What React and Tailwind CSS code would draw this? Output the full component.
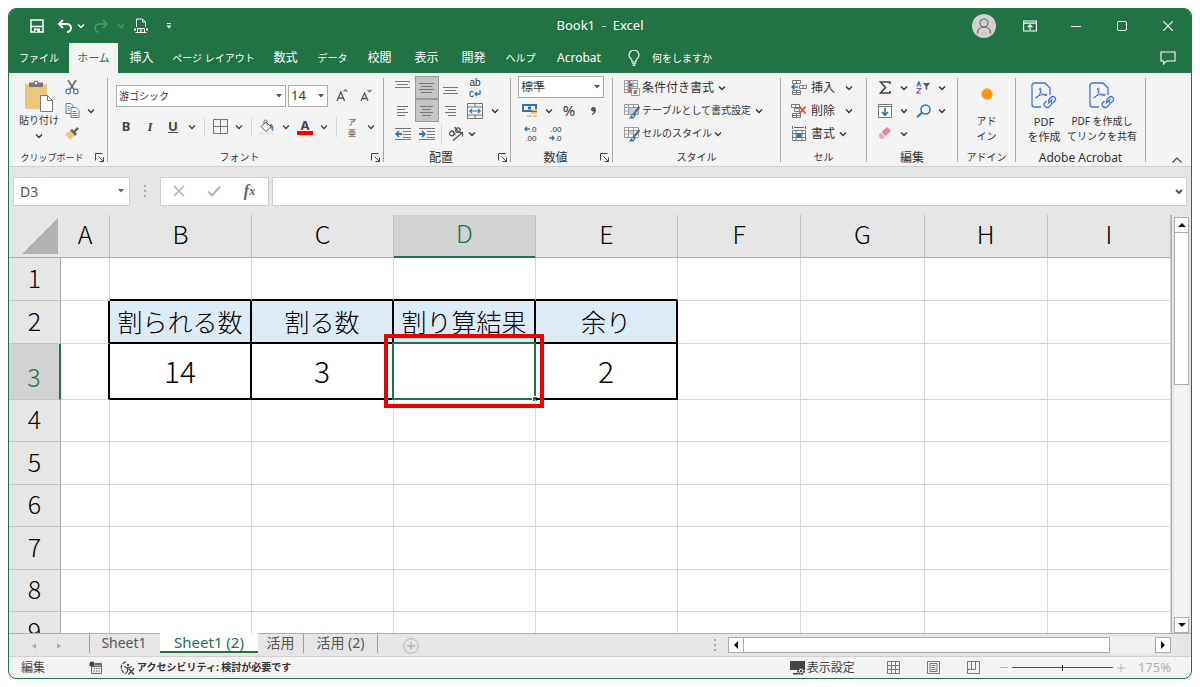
import { useState } from "react";

// リボンのタブ一覧
const TABS = [
    { label: "ファイル", size: "w-[60px] text-[10px]" },
    { label: "ホーム", size: "w-[49px] text-[11px]" },
    { label: "挿入", size: "w-[47px] text-xs" },
    { label: "ページ レイアウト", size: "w-[97px] text-[10px]" },
    { label: "数式", size: "w-[47px] text-xs" },
    { label: "データ", size: "w-[47px] text-[10px]" },
    { label: "校閲", size: "w-[47px] text-xs" },
    { label: "表示", size: "w-[47px] text-xs" },
    { label: "開発", size: "w-[47px] text-xs" },
    { label: "ヘルプ", size: "w-[47px] text-[10px]" },
    { label: "Acrobat", size: "w-[70px] text-xs" },
];

const COLUMNS = ["A", "B", "C", "D", "E", "F", "G", "H", "I"];

const ROWS = [
    { no: 1, height: "h-[43px]", cells: {} },
    { no: 2, height: "h-[43px]", cells: { B: "割られる数", C: "割る数", D: "割り算結果", E: "余り" } },
    { no: 3, height: "h-14", cells: { B: "14", C: "3", D: "", E: "2" } },
    { no: 4, height: "h-[42px]", cells: {} },
    { no: 5, height: "h-[43px]", cells: {} },
    { no: 6, height: "h-[42px]", cells: {} },
    { no: 7, height: "h-[43px]", cells: {} },
    { no: 8, height: "h-[42px]", cells: {} },
    { no: 9, height: "h-[42px]", cells: {} },
];

/* ---------- 共通パーツ ---------- */

function Chevron({ className = "" }) {
    return (
        <svg viewBox="0 0 8 8" className={`w-2 h-2 shrink-0 ${className}`} fill="none" stroke="currentColor" strokeWidth="1.3">
            <path d="M1 2.5 4 5.5 7 2.5" />
        </svg>
    );
}

function Tool({ label, className = "w-[22px]", children, ...rest }) {
    return (
        <button type="button" aria-label={label} className={`flex items-center justify-center h-[23px] shrink-0 ${className}`} {...rest}>
            {children}
        </button>
    );
}

function More({ label }) {
    return (
        <Tool label={`${label}のオプション`} className="w-4">
            <Chevron />
        </Tool>
    );
}

function Divider() {
    return <span className="w-px h-5 mx-1 bg-[#d5d5d5]" />;
}

function Picker({ label, value, className }) {
    return (
        <div className={`relative ${className}`}>
            <select aria-label={label} className="appearance-none w-full h-[22px] pl-0.5 bg-white border border-[#ababab] text-[#333] leading-none">
                <option>{value}</option>
            </select>
            <svg viewBox="0 0 6 4" className="absolute right-1 top-[9px] w-1.5 h-1 pointer-events-none" fill="#555">
                <path d="M0 0h6L3 3.6z" />
            </svg>
        </div>
    );
}

function Group({ name, className, bodyClass = "", nameClass = "text-xs", launcher, children }) {
    return (
        <>
            <section className={`flex flex-col shrink-0 ${className}`}>
                <div className={`h-[69px] ${bodyClass}`}>{children}</div>
                <div className="flex items-center h-[21px] pt-1">
                    <span className={`flex-1 text-center whitespace-nowrap ${nameClass}`}>{name}</span>
                    {launcher && (
                        <button type="button" aria-label={`${name}の設定`} className="w-2.5 mr-0.5">
                            <svg viewBox="0 0 10 10" className="w-2.5 h-2.5" fill="none" stroke="#444" strokeWidth="1">
                                <path d="M.5 7.5v-7h7M3.5 3.5l5 5M8.500 4.500v4h-4" />
                            </svg>
                        </button>
                    )}
                </div>
            </section>
            <span className="w-px mt-0.5 mb-1 bg-[#a8a8a8] shrink-0" />
        </>
    );
}

/* ---------- タイトルバー ---------- */

function TitleBar() {
    return (
        <div className="grid grid-cols-[1fr_auto_1fr] items-center h-[34px] text-white">
            <div className="flex items-center pl-4">
                <Tool label="上書き保存" className="w-6">
                    <svg viewBox="0 0 14 14" className="w-3.5 h-3.5" fill="none" stroke="#fff" strokeWidth="1.5">
                        <path d="M1 1h12v12H1zM1.500 7.500h11" />
                        <path d="M4 9.500h6V13H4z" fill="#fff" stroke="none" />
                        <path d="M5.500 11h1.500v2H5.500z" fill="#217346" stroke="none" />
                    </svg>
                </Tool>
                <Tool label="元に戻す" className="w-8">
                    <svg viewBox="0 0 16 14" className="w-4 h-3.5" fill="none" stroke="#fff" strokeWidth="2">
                        <path d="M6 1 2 5l4 4M2 5h7c3 0 5 1.600 5 4s-2 4-4 4" />
                    </svg>
                </Tool>
                <Chevron className="-ml-1" />
                <Tool label="やり直し" className="w-8 text-[#4f9a6d]">
                    <svg viewBox="0 0 16 14" className="w-4 h-3.5" fill="none" stroke="currentColor" strokeWidth="1.6">
                        <path d="M10 1l4 4-4 4M14 5H7C4 5 2 6.600 2 9s2 4 4 4" />
                    </svg>
                </Tool>
                <Chevron className="text-[#4f9a6d]" />
                <Tool label="印刷プレビュー" className="w-8">
                    <svg viewBox="0 0 14 16" className="w-3.5 h-4" fill="none" stroke="#fff" strokeWidth="1">
                        <path d="M2.500 9V1h6l3 3v5M8.500 1v3h3M3.500 10.500h7v4h-7zM1.500 14.500h11" />
                        <path d="M0 10.500h2v2H0zM12 10.500h2v2h-2z" fill="#fff" stroke="none" />
                        <circle cx="7" cy="12.500" r=".9" />
                    </svg>
                </Tool>
                <Tool label="クイック アクセスのカスタマイズ" className="w-6">
                    <svg viewBox="0 0 6 6" className="w-1.5 h-1.5" fill="#fff">
                        <path d="M1 0h4v1H1zM.5 2.500h5L3 5.500z" />
                    </svg>
                </Tool>
            </div>
            <h1 className="text-[13px] whitespace-pre">Book1  -  Excel</h1>
            <div className="flex items-center justify-end">
                <Tool label="アカウント" className="w-[46px]">
                    <svg viewBox="0 0 24 24" className="w-6 h-6" fill="none" stroke="#6b6b6b" strokeWidth="1.2">
                        <circle cx="12" cy="12" r="12" fill="#d2d0ce" stroke="none" />
                        <circle cx="12" cy="9" r="4" />
                        <path d="M5.500 19.500c0-4 2.800-6.500 6.500-6.500s6.500 2.500 6.500 6.500" />
                    </svg>
                </Tool>
                <Tool label="リボンの表示オプション" className="w-[46px]">
                    <svg viewBox="0 0 14 12" className="w-3.5 h-3" fill="none" stroke="#fff" strokeWidth="1.2">
                        <path d="M.6 1h12.800v10H.6zM.6 3.200h12.800M7 10V5M4.600 7.200 7 4.900l2.400 2.300" />
                    </svg>
                </Tool>
                <Tool label="最小化" className="w-[46px]">
                    <span className="w-2.5 h-px bg-white" />
                </Tool>
                <Tool label="最大化" className="w-[46px]">
                    <span className="w-2.5 h-2.5 border border-white rounded-xs" />
                </Tool>
                <Tool label="閉じる" className="w-[46px]">
                    <svg viewBox="0 0 10 10" className="w-2.5 h-2.5" stroke="#fff" strokeWidth="1.1">
                        <path d="M0 0l10 10M10 0 0 10" />
                    </svg>
                </Tool>
            </div>
        </div>
    );
}

function TabBar({ active, onSelect }) {
    return (
        <nav className="flex items-stretch h-[30px] text-white">
            {TABS.map((tab) => (
                <button
                    key={tab.label}
                    type="button"
                    onClick={() => onSelect(tab.label)}
                    className={`whitespace-nowrap ${tab.size} ${active === tab.label ? "bg-[#f3f3f3] text-[#217346]" : ""}`}
                >
                    {tab.label}
                </button>
            ))}
            <button type="button" className="flex items-center gap-3 pl-3.5 text-[10px]">
                <svg viewBox="0 0 12 16" className="w-3 h-4" fill="none" stroke="#fff" strokeWidth="1.1">
                    <path d="M4 12V10.500C4 9 1 8 1 5.200a5 5 0 0 1 10 0C11 8 8 9 8 10.500V12zM4 13.800h4M4.800 15.400h2.400" />
                </svg>
                何をしますか
            </button>
            <Tool label="コメント" className="w-[46px] ml-auto self-center">
                <svg viewBox="0 0 16 14" className="w-4 h-3.5" fill="none" stroke="#fff" strokeWidth="1.1">
                    <path d="M1 1h14v9H6.500L3.500 13v-3H1z" />
                </svg>
            </Tool>
        </nav>
    );
}

/* ---------- リボン ---------- */

function ClipboardGroup() {
    return (
        <Group name="クリップボード" nameClass="text-[9px]" className="w-[98px]" launcher>
            <div className="flex h-full">
                <button type="button" className="flex flex-col items-center w-[52px] pl-2 pt-1 text-[10px] leading-4 whitespace-nowrap">
                    <svg viewBox="0 0 28 32" className="w-7 h-8 shrink-0">
                        <path d="M0 4h22v25H0z" fill="#eec57c" />
                        <path d="M4 2.500h4.500a2.600 2.600 0 0 1 5 0H18V7H4z" fill="#777" />
                        <circle cx="11" cy="3" r="1.200" fill="#f3f3f3" />
                        <path d="M15.500 15.500h7l5 5v11h-12z" fill="#fff" stroke="#777" />
                        <path d="M22.500 15.500v5h5" fill="none" stroke="#777" />
                    </svg>
                    貼り付け
                    <Chevron className="mt-1" />
                </button>
                <div>
                    <Tool label="切り取り">
                        <svg viewBox="0 0 14 15" className="w-3.5 h-[15px]" fill="none" strokeWidth="1.500">
                            <path d="M3 0 9.200 10M11 0 4.800 10" stroke="#666" />
                            <circle cx="3.200" cy="11.500" r="2.300" stroke="#4a7ebb" strokeWidth="1.200" />
                            <circle cx="10.800" cy="11.500" r="2.300" stroke="#4a7ebb" strokeWidth="1.200" />
                        </svg>
                    </Tool>
                    <div className="flex">
                        <Tool label="コピー">
                            <svg viewBox="0 0 15 15" className="w-[15px] h-[15px]" fill="#fff" stroke="#777">
                                <path d="M1 .5h5l2 2v8H1z" />
                                <path d="M6 4.500h5l3 3v7H6z" />
                                <path d="M2.500 3.500h2M2.500 5.500h2M2.500 7.500h2M7.500 8.500h4M7.500 10.500h5M7.500 12.500h5" stroke="#4a7ebb" />
                            </svg>
                        </Tool>
                        <More label="コピー" />
                    </div>
                    <Tool label="書式のコピー">
                        <svg viewBox="0 0 14 13" className="w-3.5 h-[13px]">
                            <path d="M0 7l5-3 4 5-4 4z" fill="#eec57c" />
                            <path d="M5 3.500 7 2l2 1.500L12 0l2 2-3.500 3L12 7l-2 2z" fill="#666" />
                        </svg>
                    </Tool>
                </div>
            </div>
        </Group>
    );
}

function FontGroup() {
    return (
        <Group name="フォント" nameClass="text-[10px]" className="w-[275px]" launcher>
            <div className="flex items-center pl-2 pt-2">
                <Picker label="フォント" value="游ゴシック" className="w-[170px] text-[10px]" />
                <Picker label="フォント サイズ" value="14" className="w-10 ml-0.5 text-[13px]" />
                <Tool label="フォント サイズの拡大" className="w-6 ml-0.5">
                    <svg viewBox="0 0 12 13" className="w-3 h-[13px]" fill="none" stroke="#555" strokeWidth="1.300">
                        <path d="M1 12 4.800 3 8.600 12M2.300 9h5" />
                        <path d="M7.500 2.800 9.500.8l2 2" stroke="#4a7ebb" />
                    </svg>
                </Tool>
                <Tool label="フォント サイズの縮小" className="w-6">
                    <svg viewBox="0 0 12 13" className="w-3 h-[13px]" fill="none" stroke="#555" strokeWidth="1.300">
                        <path d="M1 12 4.500 4 8 12M2.300 9.500h4.500" />
                        <path d="M7.500.8l2 2 2-2" stroke="#4a7ebb" />
                    </svg>
                </Tool>
            </div>
            <div className="flex items-center pl-1.5 pt-2 text-[13px] text-[#444]">
                <Tool label="太字" className="w-6 font-bold">B</Tool>
                <Tool label="斜体" className="w-6 font-bold italic font-['Liberation_Serif',serif]">I</Tool>
                <Tool label="下線" className="w-[22px] font-bold underline">U</Tool>
                <More label="下線" />
                <Divider />
                <Tool label="罫線">
                    <svg viewBox="0 0 15 15" className="w-[15px] h-[15px]" fill="none" stroke="#777">
                        <path d="M.5.5h14v14H.5zM7.500.5v14M.5 7.500h14" />
                    </svg>
                </Tool>
                <More label="罫線" />
                <Divider />
                <Tool label="塗りつぶしの色">
                    <svg viewBox="0 0 16 16" className="w-4 h-4" fill="none" stroke="#666">
                        <path d="M2 7.500 7 3l5 5-5 4.500zM5 5V2.500a1.500 1.500 0 0 1 3 0V6" />
                        <path d="M11 5c2.500.500 3.500 3 2.500 6.500L12 7.500z" fill="#4a7ebb" stroke="#4a7ebb" />
                        <path d="M0 14.500h15" stroke="#e0e6ea" strokeWidth="2" />
                    </svg>
                </Tool>
                <More label="塗りつぶしの色" />
                <Tool label="フォントの色" className="w-[22px] flex-col">
                    <span className="font-bold leading-3">A</span>
                    <span className="w-4 h-1 bg-[#ff0000]" />
                </Tool>
                <More label="フォントの色" />
                <Divider />
                <Tool label="ふりがな" className="w-[22px] flex-col text-[8px] leading-[11px]">
                    <span>ア</span>
                    <span>亜</span>
                </Tool>
                <More label="ふりがな" />
            </div>
        </Group>
    );
}

function Lines({ d }) {
    return (
        <svg viewBox="0 0 16 16" className="w-4 h-4" fill="none" stroke="#777">
            <path d={d} />
        </svg>
    );
}

function IndentIcon({ arrow }) {
    return (
        <svg viewBox="0 0 16 14" className="w-4 h-3.5" fill="none" stroke="#777">
            <path d="M0 1.500h16M8 4.500h8M8 7.500h8M8 10.500h8M0 12.500h16" />
            <path d={arrow} stroke="#2f75b5" strokeWidth="1.800" />
        </svg>
    );
}

function AlignGroup() {
    return (
        <Group name="配置" className="w-[126px]" launcher>
            <div className="flex pl-[7px]">
                <Tool label="上揃え" className="w-6"><Lines d="M0 1.500h15M2 4.500h11M0 7.500h15" /></Tool>
                <Tool label="上下中央揃え" className="w-6 bg-[#c5c5c5] border border-[#999]"><Lines d="M0 3.500h15M2 6.500h11M0 9.500h15M2 12.500h11" /></Tool>
                <Tool label="下揃え" className="w-6"><Lines d="M0 7.500h15M2 10.500h11M0 13.500h15" /></Tool>
                <Tool label="折り返して全体を表示する" className="w-6 flex-col text-[10px] leading-[11px] font-['Liberation_Sans',sans-serif]">
                    <span>ab</span>
                    <span className="flex items-center">
                        c
                        <svg viewBox="0 0 7 7" className="w-[7px] h-[7px]" fill="none" stroke="#2f75b5" strokeWidth="1.300">
                            <path d="M6 0v4H1M3 2 1 4l2 2" />
                        </svg>
                    </span>
                </Tool>
            </div>
            <div className="flex pl-[7px]">
                <Tool label="左揃え" className="w-6"><Lines d="M2 3.500h11M2 6.500h8M2 9.500h11M2 12.500h8" /></Tool>
                <Tool label="中央揃え" className="w-6 bg-[#c5c5c5] border border-[#999]"><Lines d="M1 3.500h13M3 6.500h9M1 9.500h13M3 12.500h9" /></Tool>
                <Tool label="右揃え" className="w-6"><Lines d="M2 3.500h11M5 6.500h8M2 9.500h11M5 12.500h8" /></Tool>
                <Tool label="セルを結合して中央揃え" className="w-6">
                    <svg viewBox="0 0 16 16" className="w-4 h-4" fill="none" stroke="#777">
                        <path d="M.5.5h15v15H.5zM.5 4h15M.5 12h15M8 .5V4M8 12v3.500" />
                        <path d="M2.500 8h11M5 6 2.800 8 5 10M11 6l2.200 2L11 10" stroke="#2f75b5" strokeWidth="1.200" />
                    </svg>
                </Tool>
                <More label="セルの結合" />
            </div>
            <div className="flex items-center pl-[7px]">
                <Tool label="インデントを減らす" className="w-6"><IndentIcon arrow="M7 7H1.500M4 4 1.200 7 4 10" /></Tool>
                <Tool label="インデントを増やす" className="w-6"><IndentIcon arrow="M0 7h5.500M3 4l2.800 3L3 10" /></Tool>
                <span className="w-px h-5 ml-0.5 bg-[#d5d5d5]" />
                <Tool label="方向" className="w-6 ml-0.5">
                    <svg viewBox="0 0 16 16" className="w-4 h-4" fill="none" stroke="#555" strokeWidth="1.200">
                        <circle cx="3.800" cy="7.500" r="2.300" />
                        <path d="M3.800 4.200 7.500 8.500M6.500 1l4.200 5" />
                        <circle cx="10" cy="4.200" r="2.300" />
                        <path d="M5 14.500 14.500 6.500M10.500 6.500h4v4" />
                    </svg>
                </Tool>
                <Tool label="方向のオプション" className="w-2"><Chevron /></Tool>
            </div>
        </Group>
    );
}

function DecimalIcon({ first, second, arrow }) {
    const mark = (
        <svg viewBox="0 0 6 6" className="w-1.5 h-1.5" fill="none" stroke="#2f75b5" strokeWidth="1.500">
            <path d={arrow === "left" ? "M6 3H1M3 1 1 3l2 2" : "M0 3h5M3 1l2 2-2 2"} />
        </svg>
    );
    return (
        <span className="flex flex-col items-end text-[8px] leading-[9px] font-['Liberation_Sans',sans-serif]">
            <span className="flex items-center">{arrow === "left" && mark}{first}</span>
            <span className="flex items-center">{arrow === "right" && mark}{second}</span>
        </span>
    );
}

function NumberGroup() {
    return (
        <Group name="数値" className="w-[101px]" launcher>
            <Picker label="表示形式" value="標準" className="w-[86px] ml-[7px] text-xs" />
            <div className="flex pl-2 pt-px">
                <Tool label="通貨表示形式">
                    <svg viewBox="0 0 16 16" className="w-4 h-4">
                        <path d="M0 1h15v8H0z" fill="#2f75b5" />
                        <path d="M2 3h11v4H2z" fill="#f3f3f3" />
                        <circle cx="7.500" cy="5" r="1.800" fill="#2f75b5" />
                        <path d="M10 6h5v2h-5zM9 9h6v2H9zM5 12h5v2H5zM11 12h4v2h-4z" fill="#eec57c" />
                    </svg>
                </Tool>
                <More label="通貨表示形式" />
                <Tool label="パーセント スタイル" className="w-6 text-[15px]">%</Tool>
                <Tool label="桁区切りスタイル" className="w-6">
                    <svg viewBox="0 0 5 8" className="w-[5px] h-2" fill="#555">
                        <path d="M2.300 0C4 0 5 1.200 5 2.800 5 5 3.500 7.300 1 8L.7 7.200C2 6.500 2.800 5.500 2.800 4.500 1.200 4.800 0 3.800 0 2.300 0 1 1 0 2.300 0z" />
                    </svg>
                </Tool>
            </div>
            <div className="flex gap-0.5 pl-2">
                <Tool label="小数点以下の表示桁数を増やす"><DecimalIcon first=".0" second=".00" arrow="left" /></Tool>
                <Tool label="小数点以下の表示桁数を減らす" className="w-6"><DecimalIcon first=".00" second=".0" arrow="right" /></Tool>
            </div>
        </Group>
    );
}

function TableIcon({ children }) {
    return (
        <svg viewBox="0 0 16 16" className="w-4 h-4 shrink-0" fill="none" stroke="#999">
            <path d="M.5 1.500h14v10H.5z" fill="#fff" />
            <path d="M.5 4.500h14M.5 8h14M4.500 1.500v10M9.500 1.500v10" />
            {children}
        </svg>
    );
}

function Brush() {
    return (
        <>
            <path d="M15.500 4 10.500 10" stroke="#666" strokeWidth="2" />
            <path d="M10 9.500 12 11.500l-2.500 4H4.500c2-1 2.500-4 5.500-6z" fill="#2f75b5" stroke="none" />
            <path d="M8.500 11.500l1.500 1.300-1.500 1.700z" fill="#fff" stroke="none" />
        </>
    );
}

function StyleGroup() {
    const item = "flex items-center gap-0.5 h-[23px] whitespace-nowrap";
    return (
        <Group name="スタイル" nameClass="text-[10px]" className="w-[167px]" bodyClass="pl-[11px]">
            <button type="button" className={`${item} text-xs`}>
                <svg viewBox="0 0 16 16" className="w-4 h-4 shrink-0" fill="#fff" stroke="#999">
                    <path d="M.5.5h13v12H.5zM.5 3.500h13M.5 6.500h13M.5 9.500h13M4 .5v12M9 .5v12" />
                    <path d="M4.500 1h2v2h-2zM4.500 10h3v2h-3z" fill="#e04a2f" stroke="none" />
                    <path d="M4.500 4h4v2h-4z" fill="#2f75b5" stroke="none" />
                    <path d="M4.500 7h3v2h-3z" fill="#e04a2f" stroke="none" />
                    <path d="M7.500 8.500h8v7h-8z" />
                    <path d="M9.500 11h4M9.500 13h4M12.500 9.800l-2 4.400" stroke="#555" />
                </svg>
                条件付き書式
                <Chevron className="ml-0.5" />
            </button>
            <button type="button" className={`${item} text-[10px]`}>
                <TableIcon>
                    <path d="M5 5h9v6H5z" fill="#b8d0ea" stroke="none" />
                    <Brush />
                </TableIcon>
                テーブルとして書式設定
                <Chevron className="ml-0.5" />
            </button>
            <button type="button" className={`${item} text-[10px]`}>
                <TableIcon>
                    <path d="M5 5h4v3H5z" fill="#b8d0ea" stroke="none" />
                    <Brush />
                </TableIcon>
                セルのスタイル
                <Chevron />
            </button>
        </Group>
    );
}

function CellGroup() {
    const item = "flex items-center gap-1 h-[23px] text-xs whitespace-nowrap";
    return (
        <Group name="セル" nameClass="text-[10px]" className="w-[85px]" bodyClass="pl-2.5">
            <button type="button" className={item}>
                <svg viewBox="0 0 16 16" className="w-4 h-4" fill="#fff" stroke="#777">
                    <path d="M1.500.5h8v3h-8zM5.500.5v3M1.500 10.500h8v4h-8zM5.500 10.500v4M1.500 12.500h8M8.500 5.500h7v3h-7zM12 5.500v3" />
                    <path d="M7 7H1M3.500 4.500 1 7l2.500 2.500" fill="none" stroke="#2f75b5" strokeWidth="1.500" />
                </svg>
                挿入
                <Chevron className="ml-1.5" />
            </button>
            <button type="button" className={item}>
                <svg viewBox="0 0 16 16" className="w-4 h-4" fill="#fff" stroke="#777">
                    <path d="M.5 1.500h8v3h-8zM4.500 1.500v3M1.500 10.500h8v4h-8zM5.500 10.500v4M1.500 12.500h8M3.500 5.500h5v3h-5z" />
                    <path d="M8.500 3.500l6 7M14.500 3.500l-6 7" stroke="#e04a2f" strokeWidth="1.800" />
                </svg>
                削除
                <Chevron className="ml-1.5" />
            </button>
            <button type="button" className={item}>
                <svg viewBox="0 0 16 16" className="w-4 h-4" fill="#fff" stroke="#777">
                    <path d="M1.500 4.500h13v10h-13zM1.500 7.500h13M1.500 11.500h13M5 4.500v10M11 4.500v10" />
                    <path d="M5.500 7h5v5h-5z" fill="#2f75b5" stroke="none" />
                    <path d="M1.500 0v3M14.500 0v3M3 1.500h10" stroke="#2f75b5" />
                </svg>
                書式
                <Chevron />
            </button>
        </Group>
    );
}

function EditGroup() {
    return (
        <Group name="編集" className="w-[90px]">
            <div className="flex pl-[7px]">
                <Tool label="オート SUM">
                    <svg viewBox="0 0 12 13" className="w-3 h-[13px]" fill="none" stroke="#444" strokeWidth="1.600">
                        <path d="M11 3V1H1.500L6.500 6.500l-5 5.500H11v-2" />
                    </svg>
                </Tool>
                <More label="オート SUM" />
                <Tool label="並べ替えとフィルター">
                    <svg viewBox="0 0 14 13" className="w-3.5 h-[13px]" fill="none" strokeWidth="1.100">
                        <path d="M.8 5.500 2.800.5l2 5M1.500 4h2.600" stroke="#2f75b5" />
                        <path d="M.8 7.500h4L.8 12h4" stroke="#8a4fa3" />
                        <path d="M7 2h7l-2.700 3.500V9L9.700 8V5.500z" fill="#555" />
                    </svg>
                </Tool>
                <More label="並べ替え" />
            </div>
            <div className="flex pl-[7px]">
                <Tool label="フィル">
                    <svg viewBox="0 0 14 14" className="w-3.5 h-3.5" fill="#fff" stroke="#777">
                        <path d="M.5.5h13v13H.5zM.5 2.500h13" />
                        <path d="M7 4v7M4 8l3 3.200L10 8" fill="none" stroke="#2f75b5" strokeWidth="1.800" />
                    </svg>
                </Tool>
                <More label="フィル" />
                <Tool label="検索と選択">
                    <svg viewBox="0 0 15 14" className="w-[15px] h-3.5" fill="none" stroke="#2f75b5">
                        <circle cx="9.500" cy="5.500" r="4.500" strokeWidth="1.500" />
                        <path d="M6.200 8.500 1 13.200" strokeWidth="2" />
                    </svg>
                </Tool>
                <More label="検索" />
            </div>
            <div className="flex pl-[7px]">
                <Tool label="クリア">
                    <svg viewBox="0 0 14 13" className="w-3.5 h-[13px]">
                        <path d="M9 0l4 4-5.500 5-4-4z" fill="#e8829a" />
                        <path d="M2.800 5.800l4 4L4.500 12H3L1 9.500V7.500z" fill="#eea3b4" />
                    </svg>
                </Tool>
                <More label="クリア" />
            </div>
        </Group>
    );
}

function PdfIcon() {
    return (
        <svg viewBox="0 0 26 28" className="w-[26px] h-7 shrink-0" fill="none" stroke="#3d73e0" strokeWidth="1.300">
            <path d="M10 25H3.500A2.500 2.500 0 0 1 1 22.500v-19A2.500 2.500 0 0 1 3.500 1H14l5 5v7" />
            <path d="M5 16c3-1.500 5-5.500 5-9 0-1.500-1.500-1.500-1.300 0 .5 3.500 3.300 6.500 6.300 6.500 1.500 0 1.500-1.300 0-1.300-3.500 0-6.500 1-9.500 2.800-1 .7-1.300 1-.5 1z" strokeWidth="1" />
            <path d="M17 21.500l4.500-4.500M15.500 19 14 20.500a2.700 2.700 0 0 0 0 3.800M14 24.300l.4.400a2.700 2.700 0 0 0 3.800 0l1.800-1.800a2.700 2.700 0 0 0 0-3.800M18 20a2.700 2.700 0 0 1 .3-3l1.800-1.800a2.700 2.700 0 0 1 3.800 3.800L22 21" />
        </svg>
    );
}

function Ribbon() {
    return (
        <div className="flex items-stretch h-[93px] pt-[3px] bg-[#f3f3f3] text-[#333] overflow-hidden">
            <ClipboardGroup />
            <FontGroup />
            <AlignGroup />
            <NumberGroup />
            <StyleGroup />
            <CellGroup />
            <EditGroup />
            <Group name="アドイン" nameClass="text-[10px]" className="w-[57px]">
                <button type="button" className="flex flex-col items-center w-full pt-3 text-[10px] leading-[15px]">
                    <span className="w-3 h-3 rounded-full bg-[#ff9208] border border-[#ffc680] mb-3.5" />
                    アド<br />イン
                </button>
            </Group>
            <Group name="Adobe Acrobat" className="w-[129px]">
                <div className="flex items-start pl-1.5 pt-1.5 leading-[15px] whitespace-nowrap">
                    <button type="button" className="flex flex-col items-center w-11 gap-1 text-[11px]">
                        <PdfIcon />
                        <span>PDF<br />を作成</span>
                    </button>
                    <button type="button" className="flex flex-col items-center w-[72px] gap-1 text-[10px]">
                        <PdfIcon />
                        <span>PDF を作成し<br />てリンクを共有</span>
                    </button>
                </div>
            </Group>
            <button type="button" aria-label="リボンを折りたたむ" className="ml-auto self-end mr-2 mb-0.5">
                <svg viewBox="0 0 12 8" className="w-3 h-2" fill="none" stroke="#444" strokeWidth="1.200">
                    <path d="M1.500 6.500 6 2l4.500 4.500" />
                </svg>
            </button>
        </div>
    );
}

function FormulaBar() {
    return (
        <div className="flex items-center h-[49px] px-1 bg-[#e6e6e6] border-t border-[#d0d0d0]">
            <div className="relative w-[117px]">
                <input aria-label="名前ボックス" defaultValue="D3" className="w-full h-[29px] pl-1.5 bg-white border border-[#cfcfcf] text-sm text-[#555]" />
                <svg viewBox="0 0 6 4" className="absolute right-1.5 top-3 w-1.5 h-1" fill="#666">
                    <path d="M0 0h6L3 3.600z" />
                </svg>
            </div>
            <svg viewBox="0 0 2 12" className="w-0.5 h-3 mx-3.5" fill="#aaa">
                <path d="M0 0h2v2H0zM0 5h2v2H0zM0 10h2v2H0z" />
            </svg>
            <div className="flex items-center w-[109px] h-[29px] bg-white border border-[#cfcfcf]">
                <Tool label="キャンセル" className="w-[35px]">
                    <svg viewBox="0 0 12 12" className="w-3 h-3" stroke="#b5b5b5" strokeWidth="1.600">
                        <path d="M1 1l10 10M11 1 1 11" />
                    </svg>
                </Tool>
                <Tool label="入力" className="w-9">
                    <svg viewBox="0 0 14 12" className="w-3.5 h-3" fill="none" stroke="#b5b5b5" strokeWidth="2">
                        <path d="M1 6.500 5 10.500 13 1.500" />
                    </svg>
                </Tool>
                <Tool label="関数の挿入" className="w-[35px] items-baseline italic font-bold text-[#666] font-['Liberation_Serif',serif] text-base">
                    f<span className="text-xs">x</span>
                </Tool>
            </div>
            <div className="relative flex-1 ml-[3px]">
                <input aria-label="数式バー" className="block w-full h-[29px] px-2 bg-white border border-[#cfcfcf] text-sm" />
                <svg viewBox="0 0 8 6" className="absolute right-1 top-3 w-2 h-1.5" fill="none" stroke="#555" strokeWidth="2">
                    <path d="M1 1l3 3 3-3" />
                </svg>
            </div>
        </div>
    );
}

/* ---------- シート ---------- */

function cellClass(row, col) {
    const inTable = (r, c) => (r === 2 || r === 3) && "BCDE".includes(c);
    const next = COLUMNS[COLUMNS.indexOf(col) + 1];
    const right = inTable(row, col) || (next && inTable(row, next)) ? "border-r-2 border-r-black" : "border-r border-r-[#d6d6d6]";
    const bottom = inTable(row, col) || inTable(row + 1, col) ? "border-b-2 border-b-black" : "border-b border-b-[#d6d6d6]";
    const look = inTable(row, col) && row === 2 ? "bg-[#ddebf7] text-[25px]" : "pb-0.5 text-[30px]";
    return `${right} ${bottom} ${look}`;
}

function Sheet() {
    return (
        <div className="flex-1 min-w-0 overflow-hidden bg-white">
            <table className="w-full table-fixed border-separate border-spacing-0 text-center leading-none font-light text-black font-['Noto_Sans_CJK_JP',sans-serif]">
                <colgroup>
                    <col className="w-[52px]" />
                    <col className="w-[49px]" />
                    <col className="w-[142px]" />
                    <col className="w-[142px]" />
                    <col className="w-[142px]" />
                    <col className="w-[142px]" />
                    <col />
                    <col />
                    <col />
                    <col />
                </colgroup>
                <thead>
                    <tr className="h-[43px] text-[25px]">
                        <th className="bg-[#e6e6e6] border-b border-[#b0b0b0] p-0">
                            <svg viewBox="0 0 36 36" className="w-9 h-9 ml-auto mr-[3px]" fill="#b2b2b2">
                                <path d="M36 0v36H0z" />
                            </svg>
                        </th>
                        {COLUMNS.map((col) => (
                            <th
                                key={col}
                                scope="col"
                                className={`p-0 pb-1.5 font-light border-r border-r-[#c0c0c0] ${col === "D" ? "bg-[#d2d2d2] text-[#217346] border-b-2 border-b-[#217346]" : "bg-[#e6e6e6] border-b border-b-[#b0b0b0]"}`}
                            >
                                {col}
                            </th>
                        ))}
                    </tr>
                </thead>
                <tbody>
                    {ROWS.map((row) => (
                        <tr key={row.no} className={row.height}>
                            <th
                                scope="row"
                                className={`p-0 pb-1 align-bottom font-light text-[25px] leading-[37px] border-b border-b-[#c4c4c4] ${row.no === 3 ? "bg-[#d2d2d2] text-[#217346] border-r-2 border-r-[#217346]" : "bg-[#e6e6e6] border-r border-r-[#a6a6a6]"}`}
                            >
                                {row.no}
                            </th>
                            {COLUMNS.map((col) => (
                                <td key={col} className={`relative p-0 whitespace-nowrap ${cellClass(row.no, col)}`}>
                                    {row.cells[col]}
                                    {row.no === 3 && col === "D" && (
                                        <>
                                            <span className="absolute -inset-x-0.5 -inset-y-0.5 border-2 border-[#217346]" />
                                            <span className="absolute -right-[3px] -bottom-[3px] w-[5px] h-[5px] bg-[#217346] border-l border-t border-white" />
                                            <span className="absolute -inset-2.5 z-10 border-4 border-[#f00000]" />
                                        </>
                                    )}
                                </td>
                            ))}
                        </tr>
                    ))}
                </tbody>
            </table>
        </div>
    );
}

function ScrollButton({ label, d, className = "w-4 h-4" }) {
    return (
        <button type="button" aria-label={label} className={`flex items-center justify-center shrink-0 bg-white border border-[#ababab] ${className}`}>
            <svg viewBox="0 0 8 8" className="w-2 h-2" fill="#111">
                <path d={d} />
            </svg>
        </button>
    );
}

function SheetTabs() {
    return (
        <div className="flex items-start h-[23px] bg-[#e6e6e6] border-t border-[#b0b0b0] text-sm leading-4 text-[#555]">
            <Tool label="前のシート" className="w-12 pl-0.5">
                <svg viewBox="0 0 4 6" className="w-1 h-1.5" fill="#b0b0b0"><path d="M4 0v6L0 3z" /></svg>
            </Tool>
            <Tool label="次のシート" className="w-[32px] justify-start">
                <svg viewBox="0 0 4 6" className="w-1 h-1.5" fill="#b0b0b0"><path d="M0 0v6l4-3z" /></svg>
            </Tool>
            <button type="button" className="w-[71px] h-[19px] pb-0.5 pr-0.5 border-l border-[#a0a0a0]">Sheet1</button>
            <button type="button" className="w-[98px] h-5 -mt-px bg-white text-[15px] text-[#217346] border-b-2 border-[#217346]">Sheet1 (2)</button>
            <button type="button" className="w-[46px] h-[19px] pb-0.5 border-r border-[#a0a0a0]">活用</button>
            <button type="button" className="w-[74px] h-[19px] pb-0.5 border-r border-[#a0a0a0]">活用 (2)</button>
            <Tool label="新しいシート" className="w-[66px]">
                <svg viewBox="0 0 16 16" className="w-4 h-4" fill="none" stroke="#b5b5b5">
                    <circle cx="8" cy="8" r="7.300" />
                    <path d="M8 4v8M4 8h8" strokeWidth="1.500" />
                </svg>
            </Tool>
            <div className="flex items-center ml-auto h-full mr-5">
                <svg viewBox="0 0 2 12" className="w-0.5 h-3 mr-3" fill="#aaa">
                    <path d="M0 0h2v2H0zM0 5h2v2H0zM0 10h2v2H0z" />
                </svg>
                <ScrollButton label="左へスクロール" d="M6 0v8L2 4z" />
                <div className="w-[411px] h-4 bg-[#f0f0f0]">
                    <div className="w-[366px] h-full bg-white border border-l-0 border-[#ababab]" />
                </div>
                <ScrollButton label="右へスクロール" d="M2 0v8l4-4z" />
            </div>
        </div>
    );
}

function StatusBar() {
    return (
        <footer className="flex items-center h-[22px] pl-3 pr-5 bg-[#f3f3f3] border-t border-[#d0d0d0] text-xs text-[#444] rounded-b-lg">
            <span>編集</span>
            <Tool label="マクロの記録" className="w-4 ml-[42px]">
                <svg viewBox="0 0 13 13" className="w-[13px] h-[13px]" fill="none" stroke="#666">
                    <path d="M2.500 5v7.500h10v-10H6M3 5.500h9M4.500 7.500h1.500M7 7.500h1.500M9.500 7.500H11M4.500 10h1.500M7 10h1.500M9.500 10H11" />
                    <path d="M6 3h6v1.500H6z" fill="#666" stroke="none" />
                    <circle cx="3" cy="3" r="2.600" fill="#444" stroke="none" />
                </svg>
            </Tool>
            <button type="button" className="flex items-center gap-0.5 ml-[17px] text-[10px] font-bold text-[#333] whitespace-nowrap">
                <svg viewBox="0 0 15 14" className="w-[15px] h-3.5" fill="none" stroke="#444" strokeWidth="1.200">
                    <path d="M6 .8A6 6 0 0 0 4.500 12" strokeDasharray="4 1" />
                    <path d="M4 5.500 7.500 7v3L5.500 13M7.500 7 12 5.500" />
                    <circle cx="8" cy="4" r="1.200" fill="#444" stroke="none" />
                    <path d="M8.500 7.500l5.500 6M14 7.500l-5.500 6" strokeWidth="1.500" />
                </svg>
                アクセシビリティ: 検討が必要です
            </button>
            <div className="flex items-center ml-auto">
                <button type="button" className="flex items-center gap-0.5 mr-8">
                    <svg viewBox="0 0 15 14" className="w-[15px] h-3.5">
                        <path d="M0 0h15v9H0zM3 12h5v1.500H3z" fill="#444" />
                        <circle cx="11" cy="10" r="3" fill="#f3f3f3" stroke="#444" strokeWidth="1.800" strokeDasharray="2 .6" />
                        <circle cx="11" cy="10" r="1.200" fill="#444" />
                    </svg>
                    表示設定
                </button>
                <Tool label="標準" className="w-[13px] mr-[27px]">
                    <svg viewBox="0 0 13 13" className="w-[13px] h-[13px]" fill="none" stroke="#777">
                        <path d="M.5.5h12v12H.5zM.5 4.500h12M.5 8.500h12M4.500.5v12M8.500.5v12" />
                    </svg>
                </Tool>
                <Tool label="ページ レイアウト" className="w-[13px] mr-[27px]">
                    <svg viewBox="0 0 13 13" className="w-[13px] h-[13px]" fill="none" stroke="#777">
                        <path d="M.5.5h12v12H.5zM3 2.500h7v8H3zM4.500 4.500h4M4.500 6.500h4M4.500 8.500h4" />
                    </svg>
                </Tool>
                <Tool label="改ページ プレビュー" className="w-[13px] mr-5">
                    <svg viewBox="0 0 13 13" className="w-[13px] h-[13px]" fill="none" stroke="#777">
                        <path d="M.5.5h12v12H.5zM.5 8.500h8v-8M4.500.5v8" />
                    </svg>
                </Tool>
                <Tool label="縮小" className="w-2 mr-1">
                    <span className="w-2 h-px bg-[#b5b5b5]" />
                </Tool>
                <input
                    type="range"
                    aria-label="ズーム"
                    min="0"
                    max="100"
                    defaultValue="50"
                    className="appearance-none w-[101px] h-px bg-[#555] [&::-webkit-slider-thumb]:appearance-none [&::-webkit-slider-thumb]:w-px [&::-webkit-slider-thumb]:h-1.5 [&::-webkit-slider-thumb]:bg-[#222]"
                />
                <Tool label="拡大" className="w-2 ml-1 mr-[13px]">
                    <svg viewBox="0 0 8 8" className="w-2 h-2" stroke="#b5b5b5"><path d="M4 0v8M0 4h8" /></svg>
                </Tool>
                <span className="text-[13px] text-[#b0b0b0]">175%</span>
            </div>
        </footer>
    );
}

function App() {
    const [tab, setTab] = useState("ホーム");

    return (
        <main className="h-screen p-2 bg-white font-['Noto_Sans','Noto_Sans_CJK_JP',sans-serif]">
            <div className="flex flex-col h-full overflow-hidden border border-[#217346] rounded-lg bg-[#e6e6e6]">
                <header className="bg-[#217346]">
                    <TitleBar />
                    <TabBar active={tab} onSelect={setTab} />
                </header>
                <Ribbon />
                <FormulaBar />
                <div className="flex flex-1 min-h-0">
                    <Sheet />
                    <div className="flex flex-col w-5 pt-0.5 px-0.5 bg-[#e6e6e6] border-l border-[#b0b0b0]">
                        <ScrollButton label="上へスクロール" className="w-[15px] h-4" d="M0 6h8L4 2z" />
                        <div className="flex-1 w-[15px] bg-[#f3f3f3]">
                            <div className="h-[152px] bg-white border border-t-0 border-[#ababab]" />
                        </div>
                        <ScrollButton label="下へスクロール" className="w-[15px] h-4" d="M0 2h8L4 6z" />
                    </div>
                </div>
                <SheetTabs />
                <StatusBar />
            </div>
        </main>
    );
}

export default App;
